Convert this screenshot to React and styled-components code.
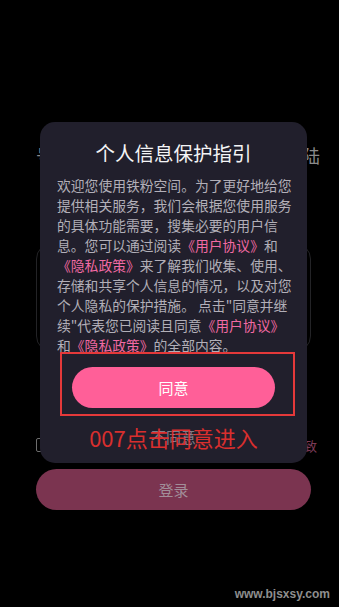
import React from "react";
import styled, { createGlobalStyle } from "styled-components";

const GlobalStyle = createGlobalStyle`
  html, body {
    margin: 0;
    padding: 0;
    background: #000;
  }
  body {
    font-family: "Noto Sans CJK SC", "Noto Sans", sans-serif;
  }
`;

const bodyLines = [
  [{ t: "欢迎您使用铁粉空间。为了更好地给您" }],
  [{ t: "提供相关服务，我们会根据您使用服务" }],
  [{ t: "的具体功能需要，搜集必要的用户信" }],
  [{ t: "息。您可以通过阅读" }, { t: "《用户协议》", link: true }, { t: "和" }],
  [{ t: "《隐私政策》", link: true }, { t: "来了解我们收集、使用、" }],
  [{ t: "存储和共享个人信息的情况，以及对您" }],
  [{ t: "个人隐私的保护措施。 点击\"同意并继" }],
  [{ t: "续\"代表您已阅读且同意" }, { t: "《用户协议》", link: true }],
  [{ t: "和" }, { t: "《隐私政策》", link: true }, { t: "的全部内容。" }],
];

const App = () => {
  return (
    <Page>
      <GlobalStyle />
      <LoginScreen>
        <TabRow>
          <Tab>号码登录</Tab>
          <Tab>密码登陆</Tab>
        </TabRow>
        <InputBox />
        <AgreeRow>
          <CheckBox />
          <AgreeText>我已阅读并同意用户协议与隐私政策一致</AgreeText>
        </AgreeRow>
        <LoginButton>登录</LoginButton>
      </LoginScreen>

      <Overlay>
        <Dialog>
          <Title>个人信息保护指引</Title>
          <Body>
            {bodyLines.map((line, i) => (
              <Line key={i}>
                {line.map((seg, j) =>
                  seg.link ? <Link key={j}>{seg.t}</Link> : <span key={j}>{seg.t}</span>
                )}
              </Line>
            ))}
          </Body>
          <AgreeArea>
            <AgreeButton>同意</AgreeButton>
            <Highlight />
          </AgreeArea>
          <Decline>
            不同意
            <Note>007点击同意进入</Note>
          </Decline>
        </Dialog>
      </Overlay>

      <Watermark>www.bjsxsy.com</Watermark>
    </Page>
  );
};

export default App;

const Page = styled.div`
  position: relative;
  width: 339px;
  height: 607px;
  background: #000;
  overflow: hidden;
`;

const LoginScreen = styled.div`
  display: flex;
  flex-direction: column;
  padding: 143px 28px 0 36px;
`;

const TabRow = styled.div`
  display: flex;
  justify-content: space-between;
  margin-right: -9px;
`;

const Tab = styled.span`
  font-size: 18px;
  line-height: 24px;
  color: #8a8a8a;
`;

const InputBox = styled.div`
  margin-top: 76px;
  height: 107px;
  border: 1px solid #232326;
  border-radius: 16px;
`;

const AgreeRow = styled.div`
  display: flex;
  align-items: center;
  justify-content: space-between;
  margin-top: 83px;
  margin-right: -6px;
  height: 20px;
`;

const CheckBox = styled.div`
  width: 11px;
  height: 12px;
  border: 1.5px solid #6d6d6d;
  border-radius: 2px;
`;

const AgreeText = styled.span`
  font-size: 13px;
  color: #7b3a57;
`;

const LoginButton = styled.div`
  margin-top: 14px;
  height: 41px;
  border-radius: 21px;
  background: #7b3450;
  color: #a28e99;
  font-size: 15px;
  display: flex;
  align-items: center;
  justify-content: center;
`;

const Overlay = styled.div`
  position: absolute;
  inset: 0;
  display: flex;
  flex-direction: column;
  align-items: flex-start;
  padding: 122px 0 0 40px;
`;

const Dialog = styled.div`
  position: relative;
  width: 267px;
  box-sizing: border-box;
  padding: 17px 0 16px;
  background: #211f2c;
  border-radius: 15px;
  display: flex;
  flex-direction: column;
  align-items: center;
`;

const Title = styled.div`
  font-size: 19.5px;
  line-height: 28px;
  color: #f4f4f6;
`;

const Body = styled.div`
  margin-top: 8px;
  align-self: stretch;
  padding-left: 17px;
  font-size: 13.8px;
  line-height: 20px;
  color: #b2afb8;
`;

const Line = styled.div`
  white-space: nowrap;
`;

const Link = styled.span`
  color: #f26aa3;
`;

const AgreeArea = styled.div`
  position: relative;
  margin-top: 12px;
`;

const AgreeButton = styled.div`
  width: 203px;
  height: 41px;
  border-radius: 21px;
  background: #ff5f98;
  color: #fff;
  font-size: 15px;
  display: flex;
  align-items: center;
  justify-content: center;
`;

const Highlight = styled.div`
  position: absolute;
  left: -12px;
  top: -15px;
  width: 231px;
  height: 60px;
  border: 2px solid #e5393a;
`;

const Decline = styled.div`
  position: relative;
  margin-top: 19px;
  font-size: 15px;
  line-height: 20px;
  color: #7f7c86;
`;

const Note = styled.span`
  position: absolute;
  left: 50%;
  top: 50%;
  transform: translate(-50%, -50%);
  white-space: nowrap;
  font-size: 22px;
  color: #e3302f;
  opacity: 0.95;
`;

const Watermark = styled.div`
  position: absolute;
  right: 9px;
  bottom: 6px;
  font-family: "Liberation Sans", Arial, sans-serif;
  font-weight: bold;
  font-size: 12px;
  color: #8e8e8e;
`;
